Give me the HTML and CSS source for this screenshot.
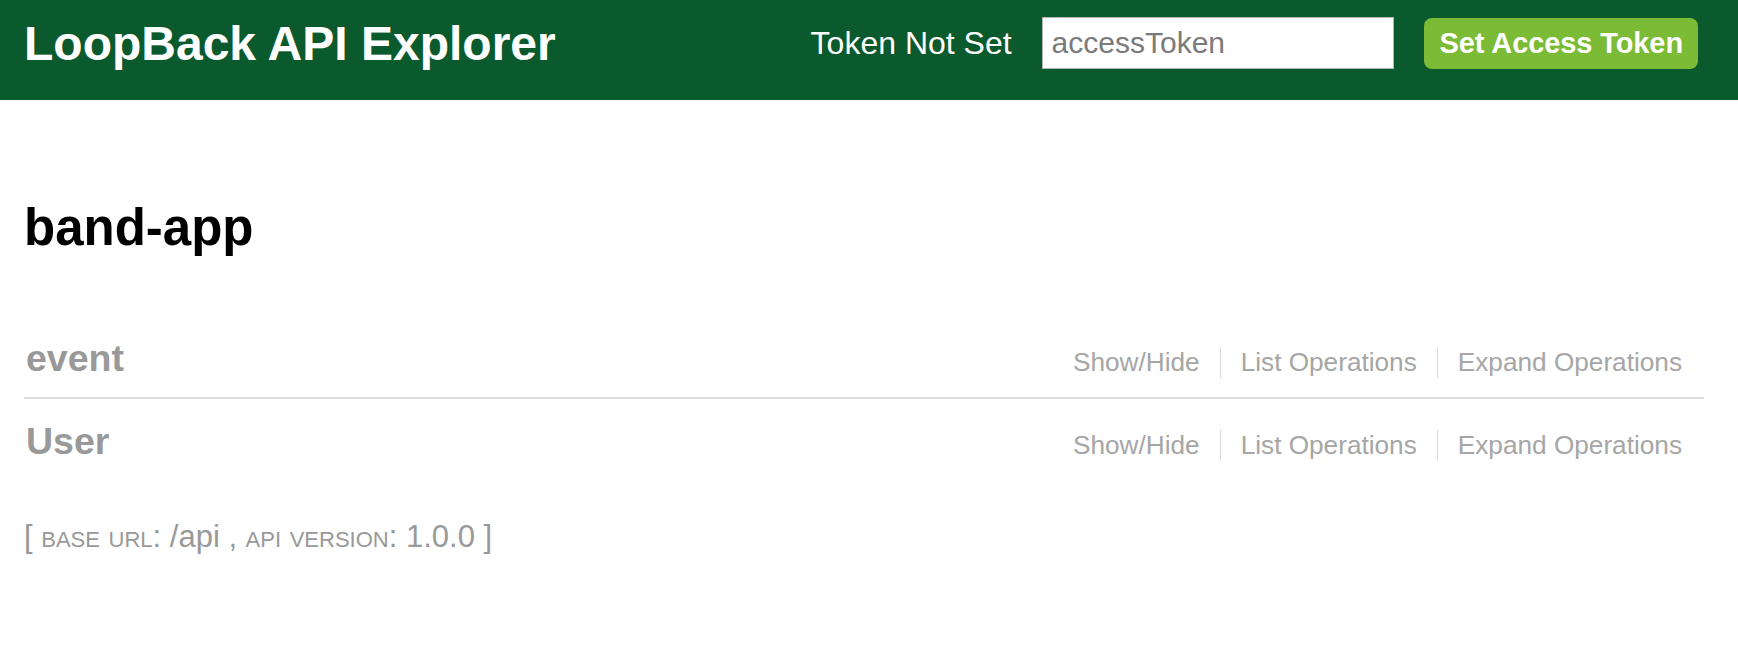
FILE: index.html
```html
<!DOCTYPE html>
<html lang="en">
<head>
<meta charset="utf-8">
<title>LoopBack API Explorer</title>
<link rel="stylesheet" href="styles.css">
</head>
<body>
<header class="header">
  <a class="brand" href="#">LoopBack API Explorer</a>
  <div class="token-bar">
    <span class="token-status">Token Not Set</span>
    <input class="token-input" type="text" placeholder="accessToken">
    <a class="token-button" href="#">Set Access Token</a>
  </div>
</header>
<main class="content">
  <h1 class="info-title">band-app</h1>
  <ul class="resources">
    <li class="resource">
      <h2 class="resource-name">event</h2>
      <ul class="options">
        <li class="option"><a href="#">Show/Hide</a></li>
        <li class="option"><a href="#">List Operations</a></li>
        <li class="option"><a href="#">Expand Operations</a></li>
      </ul>
    </li>
    <li class="resource">
      <h2 class="resource-name">User</h2>
      <ul class="options">
        <li class="option"><a href="#">Show/Hide</a></li>
        <li class="option"><a href="#">List Operations</a></li>
        <li class="option"><a href="#">Expand Operations</a></li>
      </ul>
    </li>
  </ul>
  <h4 class="footer">[ <span class="sc">base url</span>: /api , <span class="sc">api version</span>: 1.0.0 ]</h4>
</main>
</body>
</html>
```

FILE: styles.css
```css
html, body {
  margin: 0;
  padding: 0;
  background: #ffffff;
  font-family: "Liberation Sans", Arial, Helvetica, sans-serif;
}

a {
  text-decoration: none;
}

.header {
  box-sizing: border-box;
  height: 100px;
  background: #0b5a2d;
  display: flex;
  align-items: center;
  padding: 17px 40px 31px 24px;
}

.brand {
  color: #ffffff;
  font-size: 48px;
  font-weight: bold;
  line-height: 1;
  letter-spacing: 0;
  margin-top: 1px;
}

.token-bar {
  margin-left: auto;
  display: flex;
  align-items: center;
  gap: 30px;
}

.token-status {
  color: #ffffff;
  font-size: 32px;
  line-height: 1;
}

.token-input {
  box-sizing: border-box;
  width: 352px;
  height: 52px;
  margin: 0;
  border: 1px solid #b5b5b5;
  background: #ffffff;
  padding: 0 9px;
  font-family: "Liberation Sans", Arial, Helvetica, sans-serif;
  font-size: 30px;
  color: #333;
  outline: none;
}

.token-input::placeholder {
  color: #7a7a7a;
  opacity: 1;
}

.token-button {
  box-sizing: border-box;
  height: 51px;
  display: flex;
  align-items: center;
  padding: 0 15px 0 16px;
  margin-top: 1px;
  background: #7cbb35;
  border-radius: 8px;
  color: #ffffff;
  font-size: 29px;
  font-weight: bold;
  line-height: 1;
  letter-spacing: -0.1px;
}

.content {
  padding: 98px 34px 0 24px;
}

.info-title {
  margin: 0;
  font-size: 51px;
  line-height: 60px;
  font-weight: bold;
  color: #000000;
}

.resources {
  list-style: none;
  margin: 58px 0 0;
  padding: 0;
}

.resource {
  display: flex;
  align-items: baseline;
  justify-content: space-between;
  padding: 20px 0 17px;
  border-bottom: 2px solid #dddddd;
}

.resource:last-child {
  border-bottom: none;
}

.resource-name {
  margin: 0;
  font-size: 37.5px;
  line-height: 44px;
  font-weight: bold;
  color: #999999;
  padding-left: 2px;
}

.options {
  list-style: none;
  margin: 0;
  padding: 0 2px 0 0;
  display: flex;
  align-items: baseline;
}

.option {
  font-size: 26.2px;
  line-height: 31px;
  padding: 0 20px;
  border-right: 1px solid #d8d8d8;
}

.option:last-child {
  border-right: none;
}

.option a {
  color: #a6a6a6;
}

.footer {
  margin: 0;
  padding-top: 38px;
  font-size: 31px;
  line-height: 37px;
  font-weight: normal;
  color: #999999;
}

.sc {
  font-variant: small-caps;
}
```
